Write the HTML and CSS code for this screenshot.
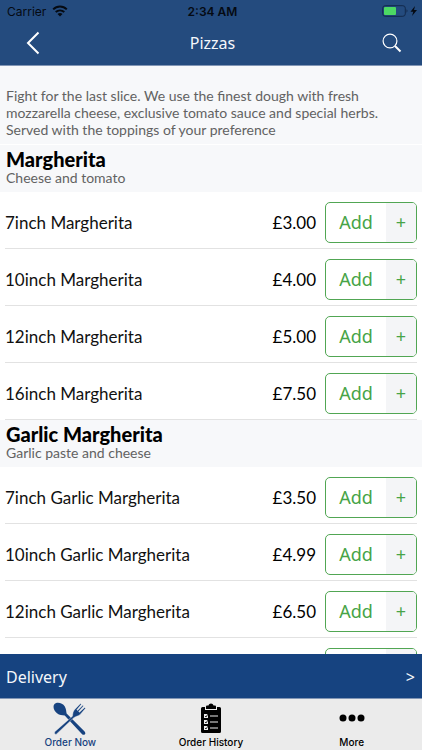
FILE: index.html
```html
<!DOCTYPE html>
<html lang="en">
<head>
<meta charset="utf-8">
<meta name="viewport" content="width=device-width, initial-scale=1">
<title>Pizzas</title>
<link rel="stylesheet" href="styles.css">
</head>
<body>
<header class="top">
  <div class="status">
    <div class="carrier">Carrier
      <svg width="16" height="12" viewBox="0 0 16 12" aria-hidden="true"><g fill="none" stroke="#050a12" stroke-width="2"><path d="M1.2 4.4C5 .6 11 .6 14.800 4.400"/><path d="M3.700 7.100C6.200 4.800 9.800 4.800 12.300 7.100"/></g><path d="M8 11.500L5.500 8.900C7 7.700 9 7.700 10.500 8.900Z" fill="#050a12"/></svg>
    </div>
    <div class="clock">2:34 AM</div>
    <div class="power">
      <svg width="36" height="12" viewBox="0 0 36 12" aria-hidden="true"><rect x=".7" y=".7" width="22.600" height="10.600" rx="2.500" fill="none" stroke="#12294b"/><rect x="2" y="2" width="12" height="8" rx="1" fill="#4cd964"/><path d="M24.500 4.300Q26.500 6 24.500 7.700Z" fill="#12294b"/><path d="M33 1L28.500 6.700H31.300L30 11L35 5.100H32Z" fill="#050a12"/></svg>
    </div>
  </div>
  <nav class="navbar">
    <button class="icon-btn" aria-label="Back"><svg width="14" height="24" viewBox="0 0 14 24"><path d="M12.500 1.500L2 12L12.500 22.500" fill="none" stroke="#fff" stroke-width="2"/></svg></button>
    <h1>Pizzas</h1>
    <button class="icon-btn" aria-label="Search"><svg width="20" height="20" viewBox="0 0 20 20"><circle cx="8" cy="8" r="6.900" fill="none" stroke="#fff" stroke-width="1.200"/><path d="M13 13L18.500 18.500" stroke="#fff" stroke-width="2"/></svg></button>
  </nav>
</header>
<main class="menu">
  <p class="intro">Fight for the last slice. We use the finest dough with fresh mozzarella cheese, exclusive tomato sauce and special herbs. Served with the toppings of your preference</p>
  <section>
    <div class="section-head"><h2>Margherita</h2><p>Cheese and tomato</p></div>
    <ul>
      <li><span>7inch Margherita</span><span class="price">£3.00</span><button class="add"><span>Add</span><span class="plus">+</span></button></li>
      <li><span>10inch Margherita</span><span class="price">£4.00</span><button class="add"><span>Add</span><span class="plus">+</span></button></li>
      <li><span>12inch Margherita</span><span class="price">£5.00</span><button class="add"><span>Add</span><span class="plus">+</span></button></li>
      <li><span>16inch Margherita</span><span class="price">£7.50</span><button class="add"><span>Add</span><span class="plus">+</span></button></li>
    </ul>
  </section>
  <section>
    <div class="section-head"><h2>Garlic Margherita</h2><p>Garlic paste and cheese</p></div>
    <ul>
      <li><span>7inch Garlic Margherita</span><span class="price">£3.50</span><button class="add"><span>Add</span><span class="plus">+</span></button></li>
      <li><span>10inch Garlic Margherita</span><span class="price">£4.99</span><button class="add"><span>Add</span><span class="plus">+</span></button></li>
      <li><span>12inch Garlic Margherita</span><span class="price">£6.50</span><button class="add"><span>Add</span><span class="plus">+</span></button></li>
      <li><button class="add" aria-label="Add"><span></span><span class="plus"></span></button></li>
    </ul>
  </section>
</main>
<button class="delivery"><span>Delivery</span><span>&gt;</span></button>
<nav class="tabs">
  <a href="#order" class="tab active">
    <svg width="34" height="34" viewBox="0 0 34 34" aria-hidden="true"><path d="M1.500 2C4-.3 9.500.8 11.800 4.400C13.300 7 13.200 9.500 13.600 11.500L31.600 29.500Q33 31.300 31.700 32.400Q30.400 33.300 28.900 31.900L11.700 13.400C9 13.200 6.500 13.200 4 11.200C.7 8.500-.5 4 1.500 2Z" fill="currentColor"/><path d="M3 32.400Q1 32 1.600 29.900L19.500 14.200C20 11 19.800 9.400 21.800 7.400L27.500 1.500L28.300 2.200L23.800 7.800L24.700 8.600L29.700 3.300L30.500 4L25.600 9.500L26.500 10.300L31.700 5.400L32.500 6.200L27.400 12.200C25.500 14.200 23.200 14 20.800 15.700Z" fill="currentColor" stroke="#ebebeb" stroke-width=".4"/></svg>
    <span>Order Now</span>
  </a>
  <a href="#history" class="tab">
    <svg width="34" height="34" viewBox="0 0 34 34" aria-hidden="true"><path d="M8.500 5H11V8H23V5H25.500Q27 5 27 6.500V29.500Q27 31 25.500 31H8.500Q7 31 7 29.500V6.500Q7 5 8.500 5Z"/><path d="M12 7V4.500Q12 3.500 13 3.500H14.500C15 .8 19 .8 19.500 3.500H21Q22 3.500 22 4.500V7Z"/><g fill="#ebebeb"><path d="M10 12h4v4h-4zM10 18h4v4h-4zM10 24h4v4h-4z"/><path d="M16 13.500h8v1h-8zM16 19.500h8v1h-8zM16 25.500h8v1h-8z"/></g><path d="M11 14l1 1 2-3M11 20l1 1 2-3M11 26l1 1 2-3" fill="none" stroke="#000" stroke-width=".8"/></svg>
    <span>Order History</span>
  </a>
  <a href="#more" class="tab">
    <svg width="34" height="34" viewBox="0 0 34 34" aria-hidden="true"><circle cx="8" cy="16" r="3.500"/><circle cx="17" cy="16" r="3.500"/><circle cx="26" cy="16" r="3.500"/></svg>
    <span>More</span>
  </a>
</nav>
</body>
</html>
```

FILE: styles.css
```css
* { box-sizing: border-box; }
body {
  margin: 0;
  height: 100vh;
  display: flex;
  flex-direction: column;
  font-family: Lato, sans-serif;
  font-size: 17px;
  color: #111;
  background: #fff;
}
h1, h2, p, ul { margin: 0; padding: 0; }
button { font: inherit; border: 0; padding: 0; background: none; cursor: pointer; }
svg { display: block; }

.top { flex: none; background: #244b7e; border-bottom: 1px solid #8296b5; }
.status {
  display: grid;
  grid-template-columns: 1fr auto 1fr;
  align-items: center;
  height: 22px;
  padding: 0 4px 0 7px;
  font-family: Inter, sans-serif;
  font-size: 12px;
  color: #050a12;
}
.carrier { display: flex; align-items: center; gap: 6px; }
.clock { font-weight: 600; }
.power { justify-self: end; }
.navbar { display: flex; align-items: center; justify-content: space-between; height: 43px; padding: 0 15px 2px 18px; }
.icon-btn { display: flex; align-items: center; justify-content: center; width: 30px; height: 40px; }
h1 { font: 400 16px/20px "Noto Sans", sans-serif; color: #f4f7fb; }

.menu { flex: 1; min-height: 0; overflow: hidden; }
.intro {
  padding: 21px 24px 6px 6px;
  border-bottom: 1px solid #fff;
  background: #f7f8fa;
  font-size: 14px;
  line-height: 17px;
  color: #626262;
}
.section-head { padding: 3px 6px 6px; background: #f7f8fa; }
h2 { font-size: 20px; line-height: 22px; font-weight: 900; color: #000; }
.section-head p { font-size: 14px; line-height: 16px; color: #626262; }
ul { list-style: none; padding: 0 5px; }
li { display: flex; align-items: center; height: 57px; padding-top: 10px; padding-bottom: 5px; border-bottom: 1px solid #e2e2e2; }
.price { margin-left: auto; margin-right: 9px; color: #000; }
.add {
  display: flex;
  width: 92px;
  height: 41px;
  margin-left: auto;
  border: 1px solid #51a653;
  border-radius: 5px;
  overflow: hidden;
  background: #fff;
  color: #47a447;
  font-family: "Noto Sans", sans-serif;
  font-size: 18px;
  line-height: 39px;
}
.price + .add { margin-left: 0; }
.add span { flex: 2; }
.add .plus { flex: 1; background: #f4f5f7; }

.delivery { flex: none; display: flex; align-items: center; justify-content: space-between; height: 44px; padding: 1px 7px 0 6px; background: #164380; color: #f4f7fb; font-family: "Noto Sans", sans-serif; font-size: 16px; }
.tabs { flex: none; display: grid; grid-template-columns: repeat(3, 1fr); height: 52px; border-top: 1px solid #8296b5; background: #ebebeb; }
.tab { display: flex; flex-direction: column; align-items: center; padding-top: 3px; color: #000; text-decoration: none; font: 500 10px/12px Inter, sans-serif; }
.active { color: #174380; }
```
